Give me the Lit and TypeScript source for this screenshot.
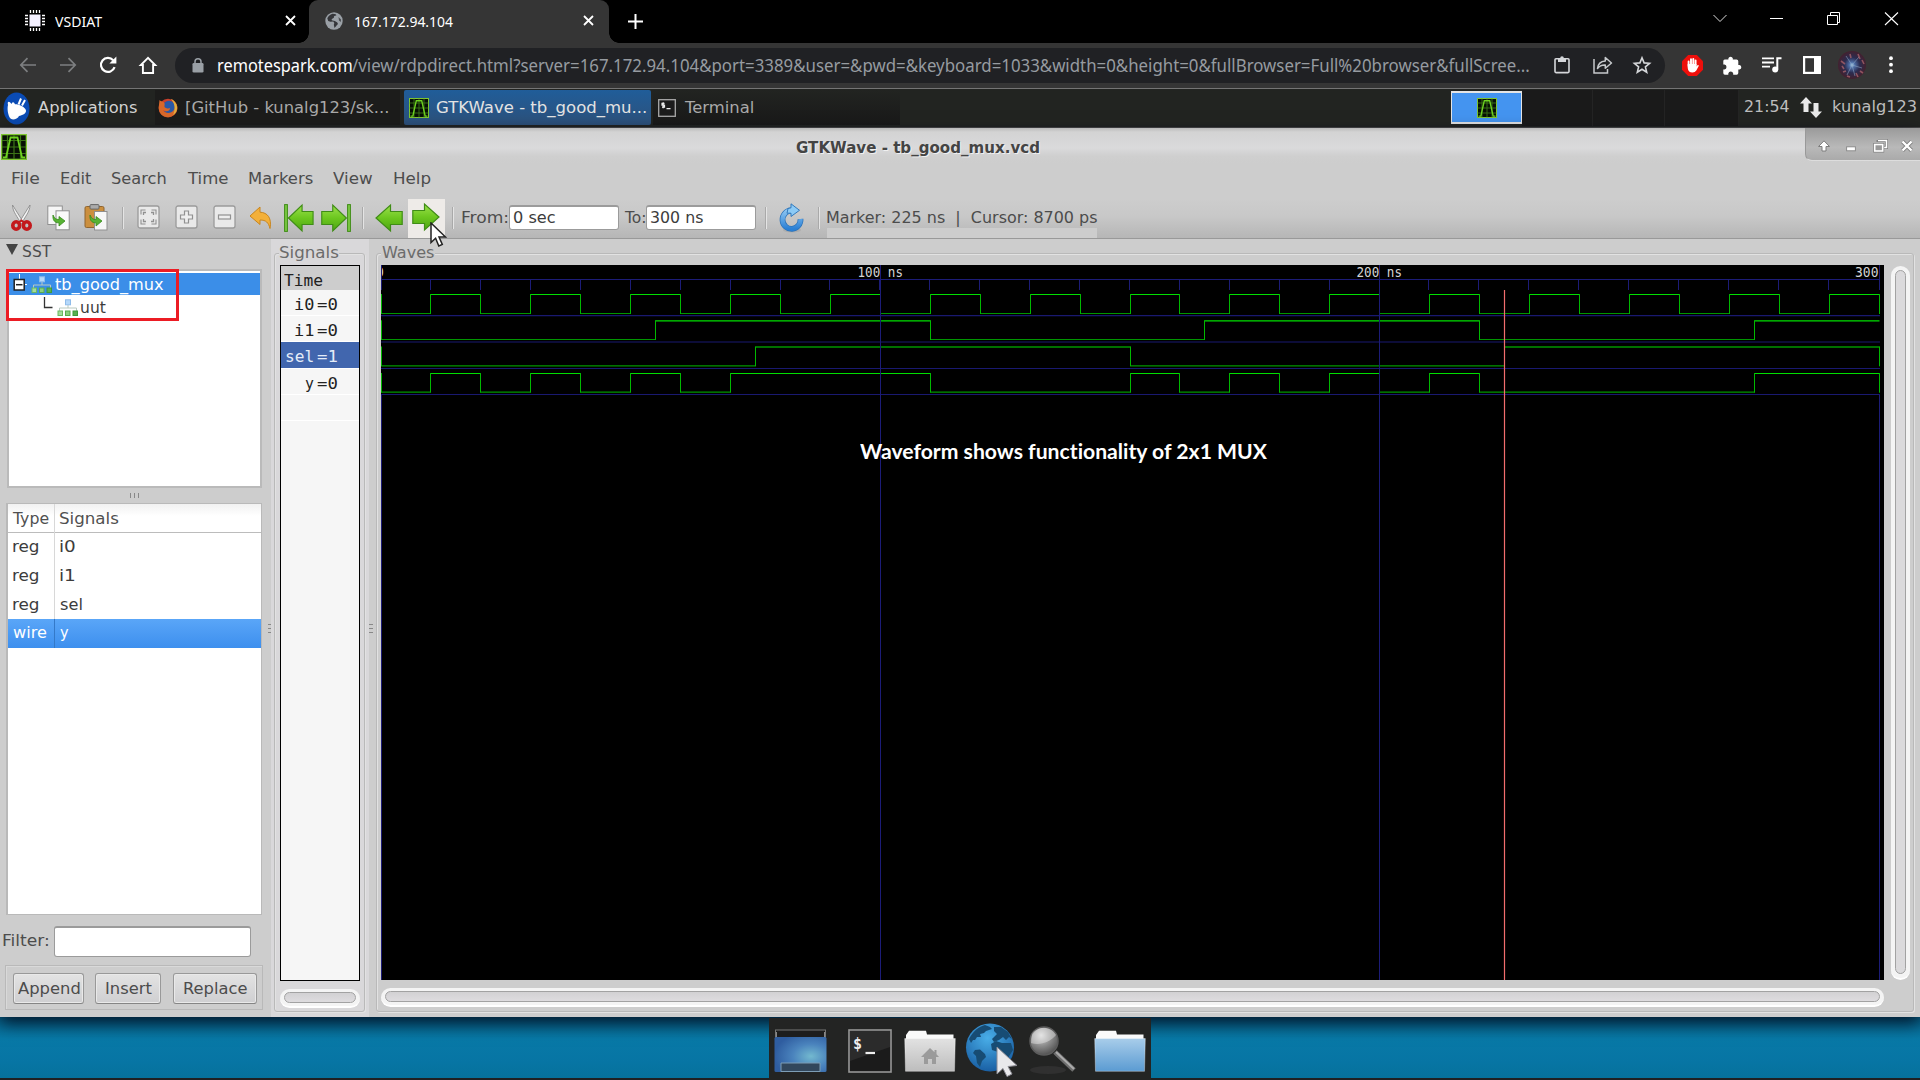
import { LitElement, html, svg, css, nothing } from "lit";
import { customElement, property } from "lit/decorators.js";

/** One line of text whose ink is stretched to an exact width. */
@customElement("fit-label")
class FitLabel extends LitElement {
  static styles = css`
    :host { display: block; white-space: pre; font-variant-ligatures: none; }
    span { display: inline-block; transform-origin: 0 50%; }
  `;
  @property() text = "";
  @property({ type: Number }) w = 0;
  render() {
    return html`<span>${this.text}</span>`;
  }
  updated() {
    const span = this.renderRoot.querySelector("span") as HTMLElement;
    const cs = getComputedStyle(span);
    const ctx = document.createElement("canvas").getContext("2d")!;
    ctx.font = `${cs.fontWeight} ${cs.fontSize} ${cs.fontFamily}`;
    const m = ctx.measureText(this.text);
    const natural = span.offsetWidth;
    const ink = m.actualBoundingBoxLeft + m.actualBoundingBoxRight + (natural - m.width);
    if (!ink) return;
    const s = this.w / ink;
    this.style.width = `${this.w}px`;
    span.style.transform = `translateX(${m.actualBoundingBoxLeft * s}px) scaleX(${s})`;
  }
}

const t = (text: string, w: number, cls = "") =>
  html`<fit-label class=${cls} .text=${text} .w=${w}></fit-label>`;

const icon = (w: number, h: number, body: unknown, cls = "") =>
  html`<svg class="ic ${cls}" width=${w} height=${h} viewBox="0 0 ${w} ${h}">${body}</svg>`;

/* ---------- icons ---------- */
const gtkw = (s: number) => html`<svg class="ic" width=${s} height=${s} viewBox="0 0 26 26">
  <rect width="26" height="26" fill="#7fc832"/><rect x="1.3" y="1.3" width="23.4" height="23.4" fill="#071004"/>
  <path d="M1 6.5H25M1 13H25M1 19.5H25M6.5 1V25M13 1V25M19.5 1V25" stroke="#3c7417" stroke-width="1.2"/>
  <path d="M2 23.5H5L9.5 3.5H16.5L21 23.5H24" fill="none" stroke="#6ed321" stroke-width="1.8"/></svg>`;

const chip = icon(20, 21, svg`<rect x="4.5" y="4.5" width="11" height="12" fill="#f4f0ff"/>
  <path d="M5.5 0V3M8.5 0V3M11.5 0V3M14.5 0V3M5.5 18V21M8.5 18V21M11.5 18V21M14.5 18V21M0 5.5H3M0 8.5H3M0 11.5H3M0 14.5H3M17 5.5H20M17 8.5H20M17 11.5H20M17 14.5H20" stroke="#fff" stroke-width="1.3"/>`);

const tabGlobe = icon(18, 18, svg`<circle cx="9" cy="9" r="8.7" fill="#9aa0a6"/>
  <path d="M7.500 1.800C5 2.500 3.300 4 2.300 6.200L3.200 9 5.500 9.800 8.300 9.600 9.300 11 8.800 12.800 9.500 16C10.800 15 11.300 13.500 12.600 12.600 13.300 11.500 12.500 10.300 11 9.800 9.800 8.600 7.500 8.800 6.500 8 6.800 6.300 8.500 6.500 9 5.500 8.500 4.500 9.800 3.500 11.200 3.600 12 2.800 10 1.700 7.500 1.800Z" fill="#35363a"/>
  <path d="M13.500 5 16 7.500 15.800 10 14 8.500Z" fill="#35363a" opacity=".8"/>`);

const xMark = icon(11, 11, svg`<path d="M1 1 10 10M10 1 1 10" stroke="#fff" stroke-width="1.8"/>`, "x");
const navBack = icon(18, 16, svg`<path d="M17 8H2M8.500 1.200 1.800 8 8.500 14.800" fill="none" stroke="#7d7f81" stroke-width="1.700"/>`);
const navFwd = icon(18, 16, svg`<path d="M1 8H16M9.500 1.200 16.200 8 9.500 14.800" fill="none" stroke="#7d7f81" stroke-width="1.700"/>`);
const reload = icon(18, 18, svg`<path d="M15.600 11.200A7 7 0 1 1 14.200 4.200" fill="none" stroke="#fff" stroke-width="2.200"/><path d="M17.400.6V7.600H10.400Z" fill="#fff"/>`);
const home = icon(18, 19, svg`<path d="M9 1.800 1.800 9H3.900V17H14.100V9H16.200Z" fill="none" stroke="#fff" stroke-width="1.900"/>`);
const lock = icon(12, 15, svg`<rect x=".5" y="5" width="11" height="9.500" rx="1.300" fill="#9aa0a6"/><path d="M3 6V3.800A3 3 0 0 1 9 3.800V6" fill="none" stroke="#9aa0a6" stroke-width="1.500"/>`);
const clip = icon(16, 18, svg`<rect x="1" y="2.800" width="14" height="13.800" rx="1" fill="none" stroke="#d5d7da" stroke-width="1.600"/><rect x="4" y="2" width="8" height="4" fill="#d5d7da"/><circle cx="8" cy="2" r="1.800" fill="#d5d7da"/>`);
const share = icon(20, 18, svg`<path d="M1 3V17H14.500V13" fill="none" stroke="#c6c9cc" stroke-width="1.500"/><path d="M4.500 12.500C5 8 8 5.300 12.300 5V1.500L18.500 7 12.300 12.300V9C9 8.800 6.500 9.800 4.500 12.500Z" fill="none" stroke="#c6c9cc" stroke-width="1.500" stroke-linejoin="round"/>`);
const star = icon(18, 18, svg`<path d="M9 1.800 11.100 6.900 16.600 7.300 12.400 10.900 13.700 16.200 9 13.300 4.300 16.200 5.600 10.900 1.400 7.300 6.900 6.900Z" fill="none" stroke="#d5d7da" stroke-width="1.600"/>`);
const adblock = icon(21, 21, svg`<path d="M6.200 0H14.800L21 6.200V14.800L14.800 21H6.200L0 14.800V6.200Z" fill="#ee0f0b"/>
  <path d="M6.600 11V6.500M9 10V4.300M11.300 10V3.900M13.600 10V5.500" stroke="#fff" stroke-width="1.900" stroke-linecap="round"/><path d="M5.700 9H14.500V11.500L15.700 10 17 10.500 14.300 15.500Q13 17.500 10.500 17.500 6.200 17.500 5.700 13Z" fill="#fff"/>`);
const puzzle = icon(19, 19, svg`<path d="M16.500 9H15.300V5.200A1.700 1.700 0 0 0 13.600 3.500H9.800V2.300A2.300 2.300 0 0 0 5.400 2.300V3.500H1.800A1.600 1.600 0 0 0 .3 5.200V8.600H1.500A2.500 2.500 0 0 1 1.500 13.500H.3V17A1.700 1.700 0 0 0 1.900 18.700H5.300V17.500A2.500 2.500 0 0 1 10.200 17.500V18.700H13.600A1.700 1.700 0 0 0 15.300 17V13.500H16.500A2.300 2.300 0 0 0 16.500 9Z" fill="#fff"/>`);
const music = icon(20, 16, svg`<path d="M0 1.300H12M0 5.500H12M0 9.700H8" stroke="#fff" stroke-width="1.800"/><circle cx="13.200" cy="12.500" r="3" fill="#fff"/><path d="M15.300 12.500V1.300H19.500" fill="none" stroke="#fff" stroke-width="2"/>`);
const side = icon(18, 18, svg`<rect x="1.100" y="1.100" width="15.800" height="15.800" fill="none" stroke="#fff" stroke-width="2.200"/><rect x="11" y="1" width="6" height="16" fill="#fff"/>`);
const avatar = icon(28, 28, svg`<defs><radialGradient id="av"><stop offset="0" stop-color="#a5cfe8"/><stop offset=".2" stop-color="#4d6da5"/><stop offset=".55" stop-color="#2b2c50"/><stop offset="1" stop-color="#43202e"/></radialGradient></defs>
  <circle cx="14" cy="14" r="14" fill="url(#av)"/><path d="M14 14 8 5M14 14 21 6M14 14 24 17M14 14 9 24M14 14 17 25" stroke="#8fa9c8" stroke-width="1" opacity=".55"/>
  <path d="M3 10 7 13M20 3 22 8M22 20 25 22M5 21 8 20M12 3 13 7M18 22 20 26M4 15 6 18M24 9 26 13M9 25 12 26" stroke="#b5686e" stroke-width="1.600" opacity=".7"/>`);
const kebab = icon(4, 18, svg`<circle cx="2" cy="2.200" r="1.900" fill="#fff"/><circle cx="2" cy="8.700" r="1.900" fill="#fff"/><circle cx="2" cy="15.200" r="1.900" fill="#fff"/>`);

const mouseLogo = icon(27, 33, svg`<ellipse cx="13.500" cy="16.500" rx="13" ry="16" fill="#0a4bb4"/>
  <path d="M5 13C4 9.500 6 8.500 8.500 12 9.500 9.500 11 9.800 12 12.300 15 12 22 14.500 23 18.500 23.500 21.500 19 23.500 16 24 14.500 27.500 8.500 28.500 7 26 5 23 4 17 5 13Z" fill="#fff"/><path d="M15.500 12.500 18 6.500M19 13.500 22 8" stroke="#fff" stroke-width="2"/>`);
const firefox = icon(20, 21, svg`<circle cx="10" cy="11" r="9.300" fill="#c93f2c"/><circle cx="11" cy="10" r="6.300" fill="#2b59a8"/>
  <path d="M1.500 3C2.500 4 4 4.800 5.500 5 8 7 5.500 9 7 10.500 9.500 12 11 11.500 12 11 12 15 7 15 5 13 6.500 17 14 17.500 16.500 12 17.500 9 16 5 13 2 18 4 20 8.500 19.300 12.500 18 18 13 20.500 9 20.300 4 19.500.5 15.500.7 10.500Z" fill="#d9682a"/><path d="M13 2C17 4 19.500 8 19 12 18.500 15 17 17 15 18 17.500 13 17.500 7 13 2Z" fill="#e0b040"/>`);
const termSmall = icon(18, 18, svg`<rect x=".7" y=".7" width="16.600" height="16.600" fill="#1c1c1c" stroke="#a9a9a9" stroke-width="1.300"/><path d="M6.500 4.300H4V6.200H6.500V8.200H4M5.200 3.300V9.200M8.500 9.700H12.500" fill="none" stroke="#eee" stroke-width="1.200"/>`);
const netIcon = icon(22, 21, svg`<path d="M6 0 12 6.500H8.500V15H3.500V6.500H0Z" fill="#e9e9e9"/><path d="M16 21 10 14.500H13.500V6H18.500V14.500H22Z" fill="#e9e9e9"/>`);

const winBtns = [
  icon(12, 12, svg`<path d="M6 .8 11.500 6.500H8V11H4V6.500H.5Z" fill="#fff" stroke="#7c7c7c" stroke-width="1"/>`),
  icon(10, 12, svg`<rect x=".6" y="6.800" width="8.800" height="4" fill="#fff" stroke="#8c8c8c"/>`),
  icon(15, 14, svg`<path d="M5 1.500H13.500V8.500H11M5 3V1" fill="none" stroke="#808080" stroke-width="3"/><path d="M5 1.500H13.500V8.500H11" fill="none" stroke="#fff" stroke-width="1.500"/><rect x="1.700" y="5.500" width="8" height="6.500" fill="#aaa" stroke="#808080" stroke-width="3"/><rect x="1.700" y="5.500" width="8" height="6.500" fill="#999" stroke="#fff" stroke-width="1.600"/>`),
  icon(12, 12, svg`<path d="M1.500 1.500 10.500 10.500M10.500 1.500 1.500 10.500" stroke="#808080" stroke-width="4"/><path d="M1.500 1.500 10.500 10.500M10.500 1.500 1.500 10.500" stroke="#fff" stroke-width="2.400"/>`),
];

const greenGrad = svg`<linearGradient id="gg" x1="0" y1="0" x2="0" y2="1"><stop offset="0" stop-color="#9be04c"/><stop offset=".5" stop-color="#6cc71f"/><stop offset="1" stop-color="#4da512"/></linearGradient>`;
const arrowR = svg`<path d="M.8 7.500H12.500V1L27 14 12.500 27V20.500H.8Z" fill="url(#gg)" stroke="#3f8c16" stroke-width="1.200"/>`;
const arrowL = svg`<path d="M27.200 7.500H15.500V1L1 14 15.500 27V20.500H27.200Z" fill="url(#gg)" stroke="#3f8c16" stroke-width="1.200"/>`;
const first = icon(30, 28, svg`<defs>${greenGrad}</defs><rect x=".6" y=".6" width="2.800" height="26.800" fill="#7ac943" stroke="#3f8c16"/><g transform="translate(3.500 0) scale(.94 1)">${arrowL}</g>`);
const last = icon(30, 28, svg`<defs>${greenGrad}</defs><rect x="26.600" y=".6" width="2.800" height="26.800" fill="#7ac943" stroke="#3f8c16"/><g transform="scale(.94 1)">${arrowR}</g>`);
const prev = icon(28, 28, svg`<defs>${greenGrad}</defs>${arrowL}`);
const next = icon(28, 28, svg`<defs>${greenGrad}</defs>${arrowR}`);

const cut = icon(21, 28, svg`<path d="M1.500 1 12.500 18.500 10 20C7 13 1.500 8 1.500 1Z" fill="#eee" stroke="#8b8b8b" stroke-width=".9"/><path d="M19 1 8 18.500 10.500 20C13.500 13 19 8 19 1Z" fill="#f4f4f4" stroke="#8b8b8b" stroke-width=".9"/>
  <ellipse cx="5.200" cy="21.500" rx="3.400" ry="3.700" fill="none" stroke="#c3191c" stroke-width="3.600"/><ellipse cx="15.800" cy="21.500" rx="3.400" ry="3.700" fill="none" stroke="#c3191c" stroke-width="3.600"/><path d="M8 18.500 10.500 16.500 13 18.500" fill="none" stroke="#c3191c" stroke-width="2"/>`);
const curl = svg`<path d="M10.500 10C10 15 12 18 16.500 17.800V21L22.500 16 16.500 11.500V14.500C13.500 14.600 12 13.500 10.500 10Z" fill="#57b233" stroke="#378a1c" stroke-width=".8"/>`;
const copy = icon(23, 26, svg`<rect x=".8" y="1" width="14.500" height="18.500" fill="#f6f6f6" stroke="#8f8f8f"/><rect x="9" y="5.800" width="13.200" height="19" fill="#fafafa" stroke="#8f8f8f"/><g transform="translate(-4.500 0)">${curl}</g>`);
const paste = icon(24, 27, svg`<rect x="1" y="2.500" width="19" height="21" rx="1.500" fill="#cb8f3e" stroke="#8f6530"/><rect x="6" y=".6" width="9" height="4.500" rx="1" fill="#aaa" stroke="#666"/><rect x="10.500" y="7.500" width="12.500" height="18.500" fill="#f7f7f7" stroke="#8f8f8f"/><g transform="translate(-4.500 1)">${curl}</g>`);
const zoomBox = (inner: unknown) => icon(23, 25, svg`<rect x="1" y="1" width="21" height="22" rx="2" fill="#e9e9e9" stroke="#9a9a9a" stroke-width="1.300"/>${inner}`);
const zFit = zoomBox(svg`<path d="M4 9.500V5H8.500M14.500 5H19V9.500M19 14.500V19H14.500M8.500 19H4V14.500" fill="none" stroke="#919191" stroke-width="1.100"/><path d="M6.500 10V7.500H9M14 7.500H16.500V10M16.500 14V16.500H14M9 16.500H6.500V14" fill="none" stroke="#919191" stroke-width="1.300"/>`);
const zIn = zoomBox(svg`<path d="M9.500 6H13.500V10H17.500V14H13.500V18H9.500V14H5.500V10H9.500Z" fill="#eee" stroke="#919191" stroke-width="1.200"/>`);
const zOut = zoomBox(svg`<rect x="5.500" y="10" width="12" height="4" fill="#eee" stroke="#919191" stroke-width="1.200"/>`);
const undo = icon(23, 24, svg`<path d="M1 10 11 1V6.200C18.500 6.500 23 12 21 22.500 19.500 16.500 17 14 11 14V18.500Z" fill="#f3b03a" stroke="#c8851f" stroke-width="1"/>`);
const refresh = icon(28, 30, svg`<defs><linearGradient id="rg" x1="0" y1="0" x2="0" y2="1"><stop offset="0" stop-color="#8cc5f2"/><stop offset="1" stop-color="#2a7fd4"/></linearGradient></defs>
  <ellipse cx="14" cy="27" rx="9" ry="2.500" fill="#9d9d9d" opacity=".5"/><path d="M13 7.500A9 9.200 0 1 0 22.500 16" fill="none" stroke="#2b72b8" stroke-width="5.800"/><path d="M13 7.500A9 9.200 0 1 0 22.500 16" fill="none" stroke="url(#rg)" stroke-width="4.300"/><path d="M13 .8 21.500 7.300 13 13.500V10.200H9L10 5.500 13 4.800Z" fill="#8ccaf5" stroke="#3179bd" stroke-width="1"/>`);
const pointer = html`<svg class="pointer" width="17" height="26" viewBox="0 0 17 26"><path d="M1 1V20.500L5.600 16.300 8.800 24 12.300 22.400 9 15H15.500Z" fill="#fff" stroke="#222" stroke-width="1.500"/></svg>`;

const hier = icon(22, 18, svg`<path d="M11 6V9M2.500 12V9H19.500V12" fill="none" stroke="#b9c9c0" stroke-width="1"/><rect x="8.500" y=".8" width="5" height="5" fill="#b5d8fa" stroke="#8fbcea"/>
  <rect x="1" y="12" width="4.500" height="4.500" fill="#a5dc9c" stroke="#6bb960"/><rect x="8.500" y="12" width="4.500" height="4.500" fill="#8bd07f" stroke="#58ab4d"/><rect x="16" y="12" width="4.500" height="4.500" fill="#58b04f" stroke="#3f9a3a"/>`);

/* dock icons */
const dDesk = icon(54, 44, svg`<defs><radialGradient id="dd" cx=".7" cy=".55" r=".7"><stop offset="0" stop-color="#73b9cf"/><stop offset=".5" stop-color="#4a83bd"/><stop offset="1" stop-color="#2f5da0"/></radialGradient></defs>
  <rect x="1.500" y="1" width="50" height="10" fill="#1d1d1d" stroke="#777"/><rect x=".5" y="8" width="52" height="35" rx="1.500" fill="url(#dd)"/><path d="M2.500 8V3M50.500 8V3" stroke="#888"/><path d="M7 42.500V34H46V42.500Z" fill="#32475c" stroke="#7d9db5" stroke-width="1"/>`);
const dTerm = icon(44, 44, svg`<rect x="1" y="1" width="42" height="42" fill="#1b1b1b" stroke="#979797" stroke-width="1.600"/><path d="M2 2H42V18L2 32Z" fill="#2b2b2b"/>
  <text x="5" y="20" font-family="DejaVu Sans Mono,monospace" font-weight="bold" font-size="15" fill="#eee">$</text><path d="M17.500 24H27" stroke="#eee" stroke-width="2.200"/>`);
const folder = (id: string, a: string, b: string, extra: unknown = nothing) => icon(52, 42, svg`<defs><linearGradient id=${id} x1="0" y1="0" x2="0" y2="1"><stop offset="0" stop-color=${a}/><stop offset="1" stop-color=${b}/></linearGradient></defs>
  <path d="M2 12V5L5 .8H22L23 4.500H49.500V12Z" fill="#fafafa"/><path d="M.7 8.500H51.300L50.500 41.300H1.500Z" fill="url(#${id})" stroke="#fff" stroke-opacity=".35"/>${extra}`);
const dHome = folder("fh", "#e2e2e2", "#bdbdbd", svg`<path d="M26 18 17 27H20V34H24V29H28V34H32V27H35L32.500 24.300V20H30.500V22.300Z" fill="#9b9b9b"/>`);
const dFolder = folder("ff", "#a8cdea", "#5b9bd2");
const dGlobe = icon(52, 54, svg`<defs><radialGradient id="dg" cx=".45" cy=".3" r=".75"><stop offset="0" stop-color="#49aee8"/><stop offset="1" stop-color="#165a9f"/></radialGradient></defs>
  <circle cx="24" cy="24.500" r="24" fill="url(#dg)"/><path d="M3 16C7 8 13 3.500 19 2L24 4 26 6 20 8 18 10 14 11 15 14 11 14 9 17 7 17 5 20Z" fill="#174c74"/><path d="M9 27 14 26.500 19 31 20 34 16 38 14 44 11 40 10 33 7 30Z" fill="#174c74"/><path d="M28 4 35 4 42 9 46 16 43 14 40 17 37 14 33 17 28 19 26 16 31 11 28 8Z" fill="#174c74"/>
  <path d="M25 21 30 18 36 20 45 20 47 27 42 35 36 40 32 29 26 27Z" fill="#174c74"/>
  <path d="M31 24V51L37 45.500 41 53.500 46 51 42 43.500 51 42.500Z" fill="#e9e9ec" stroke="#8c8c94" stroke-width="1"/>`);
const dSearch = icon(50, 50, svg`<defs><radialGradient id="ds" cx=".4" cy=".3" r=".75"><stop offset="0" stop-color="#e0e0e0"/><stop offset=".5" stop-color="#8d8d8d"/><stop offset="1" stop-color="#4c4c4c"/></radialGradient></defs>
  <ellipse cx="20" cy="44" rx="18" ry="4" fill="#303030"/><path d="M27 26 46 44" stroke="#6d6d6d" stroke-width="5"/><path d="M28 26 46 43" stroke="#ababab" stroke-width="2"/><circle cx="16" cy="15" r="14" fill="url(#ds)" stroke="#5c5c5c" stroke-width="1.500"/><path d="M3 17C12 20 22 16 28 9 24 1 10-1 4 8Z" fill="#e8e8e8" opacity=".45"/>`);

/* ---------- waveform data (ns) ---------- */
const X0 = 381;
const PX = 4.9935;
const xs = (n: number) => Math.floor(X0 + PX * n) + 0.5;
interface Wave { hi: number; lo: number; sep: number; edges: number[]; drop: boolean }
const waves: Wave[] = [
  { hi: 294.5, lo: 313.5, sep: 315.7, edges: Array.from({ length: 29 }, (_, i) => (i + 1) * 10), drop: true },
  { hi: 320.8, lo: 339.5, sep: 342, edges: [55, 110, 165, 220, 275], drop: false },
  { hi: 347, lo: 365.8, sep: 368.5, edges: [75, 150, 225], drop: true },
  { hi: 373.5, lo: 392.2, sep: 394.5, edges: [10, 20, 30, 40, 50, 60, 70, 110, 150, 160, 170, 180, 190, 200, 210, 220, 275], drop: true },
];

const drawWave = (w: Wave) => {
  const stops = [0, ...w.edges, 300];
  const hi: string[] = [], lo: string[] = [], v: string[] = [`M381.5 ${w.hi - 0.5}V${w.lo + 0.5}`];
  for (let i = 0; i < stops.length - 1; i++) {
    const high = i % 2 === 1;
    (high ? hi : lo).push(`M${xs(stops[i])} ${high ? w.hi : w.lo}H${xs(stops[i + 1])}`);
    if (i > 0) v.push(`M${xs(stops[i])} ${w.hi - 0.5}V${w.lo + 0.5}`);
  }
  if (w.drop) v.push(`M${xs(300)} ${w.hi - 0.5}V${w.lo + 0.5}`);
  return svg`<path d="M381 ${w.sep}H1880" class="sep"/><path d=${lo.join("")} class="lo"/><path d=${hi.join("")} class="hi"/><path d=${v.join("")} class="vv"/>`;
};

@customElement("app-root")
class AppRoot extends LitElement {
  static styles = css`
    :host { display: block; width: 1920px; height: 1080px; overflow: hidden; position: relative; background: #000;
      font-family: "DejaVu Sans", sans-serif; font-size: 16.5px; color: #4c4c4c; }
    * { box-sizing: border-box; }
    .ic { display: block; overflow: visible; flex: none; }
    /* browser */
    .tabs { height: 43px; display: grid; grid-template-columns: 309px 300px 1fr auto; background: #000; color: #fff;
      font: 15px/38px "Noto Sans", "Open Sans", sans-serif; }
    .tab { display: grid; align-items: center; height: 43px; padding-bottom: 2px; }
    .tab1 { grid-template-columns: 30px 230px 11px; padding-left: 25px; }
    .tab2 { grid-template-columns: 30px 228px 11px; padding-left: 16px; background: #353535; border-radius: 9px 9px 0 0; position: relative; }
    .tab2::before, .tab2::after { content: ""; position: absolute; bottom: 0; width: 10px; height: 10px; }
    .tab2::before { left: -10px; background: radial-gradient(circle at 0 0, #000 9.5px, #353535 10px); }
    .tab2::after { right: -10px; background: radial-gradient(circle at 100% 0, #000 9.5px, #353535 10px); }
    .plus { padding: 14px 0 0 19px; }
    .caption { display: grid; grid-template-columns: 57px 57px 58px 40px; padding-top: 12px; width: 207px; margin-left: -1px; }
    .bar { height: 45px; background: #353535; display: grid; align-items: center;
      grid-template-columns: 40px 40px 40px 36px 1490px 1fr; padding-left: 19px; }
    .bar > .ic { margin-top: -1px; }
    .omni { height: 35px; border-radius: 18px; background: #202124; display: grid; align-items: center;
      grid-template-columns: 26px 134px 1202px 39px 40px 20px; padding-left: 17px; margin-top: -1px; 
      font: 17.5px/34px "Noto Sans", "Open Sans", sans-serif; color: #969ba0; }
    .omni .host { color: #fff; }
    .ext { display: grid; grid-template-columns: 41px 39px 41px 35px 51px 4px; align-items: center; padding-left: 17px; margin-top: -1px; }
    .rule { height: 1px; background: #747474; }
    /* desktop panel */
    .panel { height: 39px; background: #222421; display: grid; color: #bdbdbd; line-height: 36px; align-items: start;
      grid-template-columns: 155px 249px 249px 798px 293px 1fr; border-bottom: 1px solid #4b4b4b; }
    .apps { display: grid; grid-template-columns: 35px 1fr; padding: 1px 0 0 3px; align-items: center; color: #d2d2d2; }
    .task { display: grid; align-items: center; height: 35px; width: 247px; margin-top: 1px; line-height: 34px; background: #1c1c1b; color: #a9a9a9; }
    .task.ff { grid-template-columns: 28px 1fr; padding-left: 3px; width: 245px; }
    .task.gw { grid-template-columns: 27px 1fr; padding-left: 5px; background: linear-gradient(#205d99, #2d517b); color: #e3e3e3; border-radius: 2px; }
    .task.tm { grid-template-columns: 26px 1fr; padding-left: 5px; background: linear-gradient(#222421, #191919); }
    .spaces { display: grid; grid-template-columns: 71px 71px 72px 74px; height: 36px; margin-top: 1px; width: 288px; }
    .space { background: #1a1a1a; border-right: 1px solid #242424; }
    .space.on { height: 33px; background: #4494f0; border: 1px solid #e4e4e4; border-width: 2px 1px; margin-top: 1px; display: grid; place-items: center; }
    .tray { display: grid; grid-template-columns: 55px 33px 1fr; align-items: center; padding-left: .5px; }
    /* window */
    .win { height: 889px; background: #cdcdcd; box-shadow: 0 6px 16px #001c; position: relative; }
    .title { height: 35px; display: grid; grid-template-columns: 796px 1009px 115px; background: linear-gradient(#b9b9b9, #d3d3d3 4px, #dadadb 20px, #cfcfcf 28px, #cdcdcd); }
    .title .logo { padding: 6px 0 0 1px; }
    .name { font-weight: bold; font-size: 15px; line-height: 41px; color: #444; text-shadow: 1px 1px 0 #f0f0f0; }
    .wb { display: grid; grid-template-columns: 28px 27px 28px 14px; align-items: center; height: 33px; padding: 4px 0 0 12px; background: linear-gradient(#9a9a9a, #b9b9b9 60%, #aaa); border-radius: 0 0 0 7px; border-left: 1px solid #999; border-bottom: 1px solid #ddd; }
    .menu { height: 31px; display: grid; grid-template-columns: 48.500px 51.500px 74.500px 62px 84px 61px 40px; padding-left: 12px; line-height: 31px; }
    .tools { height: 45px; display: grid; align-items: center; padding: 3px 0 0 11px; position: relative; line-height: 38px; border-bottom: 1px solid #999;
      background: linear-gradient(#cdcdcd 10%, #c8c8c8 50%, #b6b6b6);
      grid-template-columns: 36px 37px 38px 15px 38px 38px 36px 35px 37px 41px 13px 33px 44px 10px 47px 115px 22px 119px 13px 40px 9px 272px; }
    .vs { width: 2px; height: 22px; border-left: 1px solid #a9a9a9; border-right: 1px solid #e4e4e4; }
    .hot { width: 37px; height: 39px; background: #eeebe8; display: grid; align-items: center; padding-left: 4px; align-self: end; }
    .hot .ic { margin-top: -3px; }
    .entry { width: 110px; height: 25px; background: #fff; border: 1px solid #9b9b9b; border-top-width: 2px; border-radius: 3px; padding-left: 4px; line-height: 22px; color: #3c3c3c; }
    .status { height: 41px; line-height: 41px; background: linear-gradient(transparent 31px, #cdcdcd 31px); }
    .tools > fit-label:not(.status) { margin-top: 1px; }
    .pointer { position: absolute; left: 430px; top: 28px; z-index: 3; }
    .body { height: 778px; display: grid; grid-template-columns: 271px 98px 1551px; }
    .left { display: flex; flex-direction: column; position: relative; }
    .sst { height: 30px; display: grid; grid-template-columns: 17px 1fr; padding: 0 0 6px 6px; line-height: 23px; align-items: center; }
    .sst .ic { margin-top: -3px; }
    .tree { margin-left: 7px; width: 255px; height: 219px; background: #fff; border: 2px solid #bababa; padding-top: 2px; flex: none; }
    .node { display: grid; align-items: center; height: 21px; line-height: 22px; }
    .node.a { height: 22px; line-height: 23px; background: #3b8ee8; color: #fff; grid-template-columns: 18px 24px 1fr; padding-left: 4px; }
    .node.b { grid-template-columns: 13px 24px 1fr; padding-left: 35px; color: #3c3c3c; height: 25px; line-height: 25px; }
    .redbox { position: absolute; left: 6px; top: 30px; width: 173px; height: 52px; border: 3px solid #ec1c24; }
    .hgrip, .vgrip { display: grid; }
    .hgrip { height: 15px; grid-template-columns: repeat(3, 4px); padding: 5px 0 5px 130px; }
    .hgrip i { border-left: 1px solid #888; }
    .list { margin-left: 6px; width: 256px; height: 412px; background: #fff; border: 1px solid #b9b9b9; border-left-width: 2px; }
    .lr { display: grid; grid-template-columns: 46.500px 1fr; height: 28.800px; line-height: 28px; color: #3c3c3c; }
    .lr > * { padding-left: 5px; height: 100%; }
    .lr > .c1 { border-right: 1px solid #d8d8d8; }
    .lr > .c2 { padding-left: 5.500px; }
    .lr.head { height: 29px; background: linear-gradient(#f1f1f1, #fff 12px); border-bottom: 1px solid #bcbcbc; color: #505050; line-height: 30px; }
    .lr.head > .c1 { padding-left: 3.500px; }
    .lr.head > .c2 { padding-left: 5px; }
    .lr.sel { background: linear-gradient(#5aa6f8, #3d8fee); color: #fff; }
    .lr.sel > .c1 { border-color: #3479c8; padding-left: 4.500px; }
    .filter { height: 50px; display: grid; grid-template-columns: 51px 1fr; padding: 0 0 0 3px; line-height: 52px; align-items: center; }
    .fentry { width: 197px; height: 31px; background: #fff; border: 1px solid #9b9b9b; border-top-width: 2px; border-radius: 3px; margin-top: 1px; }
    .btns { margin-left: 5px; width: 258px; height: 45px; border: 1px solid #b9b9b9; display: grid; grid-template-columns: 82px 78px 84px; padding: 7px 0 0 6.500px; box-shadow: inset 1px 1px 0 #d9d9d9; }
    .btn { height: 31px; border: 1px solid #999; border-bottom-color: #858585; border-radius: 3px; background: linear-gradient(#e3e3e3, #cfcfd1); box-shadow: inset 0 0 0 1px #e9e9e9; line-height: 29px; padding-left: 4.500px; }
    .btn.b1 { width: 71px; } .btn.b2 { width: 66px; padding-left: 10px; } .btn.b3 { width: 84px; padding-left: 10px; }
    .sig { background: #d9d8da; position: relative; }
    .frame { margin: 14px 4px 0 3px; height: 759px; border: 1px solid #b9b9b9; border-radius: 3px; box-shadow: inset 1px 1px 0 #e2e2e2, 1px 1px 0 #e2e2e2; }
    .legend { width: max-content; height: 20px; line-height: 19px; margin: -11px 0 0 4px; padding: 0 1px; background: #d9d8da; color: #6b6b6b; }
    .names { margin: 2px 0 0 5px; width: 80px; height: 716px; background: #f6f6f6; border: 1px solid #000; color: #222;
      font-family: "DejaVu Sans Mono", monospace; font-size: 16.500px; line-height: 27px; }
    .nr { height: 26.200px; display: grid; grid-template-columns: 33px 1fr; border-bottom: 1px solid #fff; padding-left: 3px; }
    .nr fit-label:first-child { justify-self: end; margin-right: 3.500px; margin-top: 1px; }
    .nr fit-label:last-child { margin-top: 1px; }
    .nr.time { height: 24px; grid-template-columns: 1fr; background: #cdcdcd; border: 0; line-height: 29px; }
    .nr.time fit-label { justify-self: start; margin: 0; }
    .nr.on { background: #4166ae; color: #e4ecf8; }
    .track { background: #f4f4f4; border-radius: 10px; padding: 3px 4px; border-bottom: 2px solid #fff; }
    .thumb { background: linear-gradient(#d2d1d3, #dedcdf); border: 1.500px solid #a2a2a2; border-radius: 8px; height: 100%; }
    .st { width: 80px; height: 19px; margin: 8px 0 0 5px; }
    .wv { display: grid; grid-template-columns: 7px 1538px; position: relative; }
    .vgrip { grid-auto-rows: 4px; align-content: start; padding-top: 385px; }
    .vgrip i { border-top: 1px solid #888; width: 4px; }
    .lgrip { position: absolute; left: 268px; top: 0; }
    .wframe { margin: 14px 0 0 0; }
    .wframe .legend { background: #cdcdcd; margin-left: 3.500px; }
    .wrow { display: grid; grid-template-columns: 1510px 19px; margin: 2px 0 0 4px; position: relative; }
    .wtrack { height: 714px; margin-top: 1px; padding: 4px; }
    .wtrack .thumb { background: #dbdadc; }
    .ht { width: 1503px; height: 19px; margin: 8px 0 0 4px; }
    .canvas { display: block; background: #000; font: 14px "DejaVu Sans Mono", monospace; }
    .grid { stroke: #1c1c78; fill: none; stroke-width: 1; }
    .sep { stroke: #191970; stroke-width: 1.200; }
    .hi { stroke: #00df00; stroke-width: 1.200; }
    .lo { stroke: #009600; stroke-width: 1.200; }
    .vv { stroke: #00b900; stroke-width: 1; }
    .mark { stroke: #f26d6d; stroke-width: 1.200; }
    .note { position: absolute; left: 478.500px; top: 170px; color: #fff; font: bold 21.500px/32px Lato, sans-serif; }
    /* wallpaper + dock */
    .desk { height: 63px; background: linear-gradient(#06648a, #0879a7 22px, #0775a4 45px, #06729c); border-bottom: 2px solid #202122; display: grid; justify-content: center; }
    .dock { width: 382px; height: 62px; background: #232423; display: grid; grid-template-columns: 74px 56px 62px 62px 66px 52px; padding: 3px 0 0 5px; align-items: center; margin: 1px 0 0 0; z-index: 1; }
    .dock .dg { align-self: start; margin-top: 2px; }
  `;

  render() {
    const name = (a: string, aw: number, b: string, cls = "") =>
      html`<div class="nr ${cls}">${t(a, aw)}${t(b, 20)}</div>`;
    const row = (a: string, aw: number, b: string, bw: number, cls = "") =>
      html`<div class="lr ${cls}"><div class="c1">${t(a, aw)}</div><div class="c2">${t(b, bw)}</div></div>`;
    const grip = (cls: string) => html`<div class=${cls}><i></i><i></i><i></i></div>`;
    const vs = html`<div class="vs"></div>`;
    const ticks = Array.from({ length: 29 }, (_, i) => `M${Math.floor(380.8 + 4.991 * (i + 1) * 10) + 0.5} 280V290`).join("");
    return html`
      <div class="tabs">
        <div class="tab tab1">${chip}${t("VSDIAT", 47.5)}${xMark}</div>
        <div class="tab tab2">${tabGlobe}${t("167.172.94.104", 98)}${xMark}</div>
        <div class="plus">${icon(15, 15, svg`<path d="M7.500 0V15M0 7.500H15" stroke="#fff" stroke-width="2"/>`)}</div>
        <div class="caption">
          ${icon(14, 14, svg`<path d="M.5 3 7 9.500 13.500 3" fill="none" stroke="#ddd"/>`)}
          ${icon(13, 14, svg`<path d="M0 6.500H13" stroke="#fff"/>`)}
          ${icon(13, 14, svg`<path d="M.5 3.500H10.500V12.500H.5ZM3.500 3V.5H12.500V10.500H11" fill="none" stroke="#fff"/>`)}
          ${icon(13, 14, svg`<path d="M0 .5 13 13M13 .5 0 13" stroke="#fff" stroke-width="1.100"/>`)}
        </div>
      </div>
      <div class="bar">
        ${navBack}${navFwd}${reload}${home}
        <div class="omni">${lock}${t("remotespark.com", 133, "host")}
          ${t("/view/rdpdirect.html?server=167.172.94.104&port=3389&user=&pwd=&keyboard=1033&width=0&height=0&fullBrowser=Full%20browser&fullScree...", 1177)}
          ${clip}${share}${star}</div>
        <div class="ext">${adblock}${puzzle}${music}${side}${avatar}${kebab}</div>
      </div>
      <div class="rule"></div>
      <div class="panel">
        <div class="apps">${mouseLogo}${t("Applications", 99)}</div>
        <div class="task ff">${firefox}${t("[GitHub - kunalg123/sk...", 202)}</div>
        <div class="task gw">${gtkw(20)}${t("GTKWave - tb_good_mu...", 210)}</div>
        <div class="task tm">${termSmall}${t("Terminal", 70)}</div>
        <div class="spaces"><div class="space on">${gtkw(20)}</div><div class="space"></div><div class="space"></div><div class="space"></div></div>
        <div class="tray">${t("21:54", 44.5)}${netIcon}${t("kunalg123", 84)}</div>
      </div>
      <div class="win">
        <div class="title">
          <div class="logo">${gtkw(26)}</div>
          ${t("GTKWave - tb_good_mux.vcd", 243.5, "name")}
          <div class="wb">${winBtns}</div>
        </div>
        <div class="menu">
          ${t("File", 28)}${t("Edit", 31)}${t("Search", 54.5)}${t("Time", 41)}${t("Markers", 64)}${t("View", 39)}${t("Help", 37)}
        </div>
        <div class="tools">
          ${cut}${copy}${paste}${vs}${zFit}${zIn}${zOut}${undo}${first}${last}${vs}${prev}
          <div class="hot">${next}</div>${vs}
          ${t("From:", 45)}<div class="entry">${t("0 sec", 42)}</div>
          ${t("To:", 21)}<div class="entry">${t("300 ns", 52)}</div>
          ${vs}${refresh}${vs}
          ${t("Marker: 225 ns  |  Cursor: 8700 ps", 270, "status")}
          ${pointer}
        </div>
        <div class="body">
          <div class="left">
            <div class="sst">${icon(12, 11, svg`<path d="M0 0H12L6 11Z" fill="#444"/>`)}${t("SST", 29)}</div>
            <div class="tree">
              <div class="node a">
                ${icon(14, 22, svg`<path d="M6.500 0V5M12 10.500H14" stroke="#fff"/><rect x="1.200" y="5.500" width="10" height="10.500" fill="#fff" stroke="#222" stroke-width="1.500"/><path d="M3 10.700H9.500" stroke="#222" stroke-width="1.500"/>`)}
                ${hier}${t("tb_good_mux", 109)}
              </div>
              <div class="node b">
                ${icon(9, 22, svg`<path d="M.5 0V10.500H8.500" fill="none" stroke="#333" stroke-width="1.300"/>`)}
                ${hier}${t("uut", 25)}
              </div>
            </div>
            ${grip("hgrip")}
            <div class="list">
              ${row("Type", 37, "Signals", 58, "head")}
              ${row("reg", 25, "i0", 15)}${row("reg", 25, "i1", 14)}${row("reg", 25, "sel", 22)}${row("wire", 34, "y", 9, "sel")}
            </div>
            <div class="filter">${t("Filter:", 45)}<div class="fentry"></div></div>
            <div class="btns">
              <div class="btn b1">${t("Append", 61)}</div><div class="btn b2">${t("Insert", 46)}</div><div class="btn b3">${t("Replace", 63)}</div>
            </div>
            <div class="redbox"></div>
            <div class="lgrip">${grip("vgrip")}</div>
          </div>
          <div class="sig">
            <div class="frame">
              <div class="legend">${t("Signals", 58)}</div>
              <div class="names">
                <div class="nr time">${t("Time", 38.5)}</div>
                ${name("i0", 18.5, "=0")}${name("i1", 18.5, "=0")}${name("sel", 27.5, "=1", "on")}${name("y", 9, "=0")}
                <div class="nr"></div>
              </div>
              <div class="track st"><div class="thumb"></div></div>
            </div>
          </div>
          <div class="wv">
            ${grip("vgrip")}
            <div class="frame wframe">
              <div class="legend">${t("Waves", 52)}</div>
              <div class="wrow">
                <svg class="canvas" width="1503" height="715" viewBox="381 265 1503 715">
                  ${waves.map(drawWave)}
                  <g fill="#d5d5d5">
                    <text x="375.500" y="277">0</text>
                    <text x="857.500" y="277" textLength="45.500" lengthAdjust="spacingAndGlyphs">100 ns</text>
                    <text x="1356.500" y="277" textLength="45.500" lengthAdjust="spacingAndGlyphs">200 ns</text>
                    <text x="1855" y="277" textLength="23.500" lengthAdjust="spacingAndGlyphs">300</text>
                  </g>
                  <path class="grid" d="M381 279.5H1880M381.5 265V290M381.5 395V980M880.5 265V980M1379.5 265V980M1879.5 265V290M1879.5 395V980${ticks}"/>
                  <path class="mark" d="M1504.5 290V980"/>
                </svg>
                <div class="track wtrack"><div class="thumb"></div></div>
                <div class="note">${t("Waveform shows functionality of 2x1 MUX", 408)}</div>
              </div>
              <div class="track ht"><div class="thumb"></div></div>
            </div>
          </div>
        </div>
      </div>
      <div class="desk">
        <div class="dock">${dDesk}${dTerm}${dHome}<div class="dg">${dGlobe}</div>${dSearch}${dFolder}</div>
      </div>
    `;
  }
}
